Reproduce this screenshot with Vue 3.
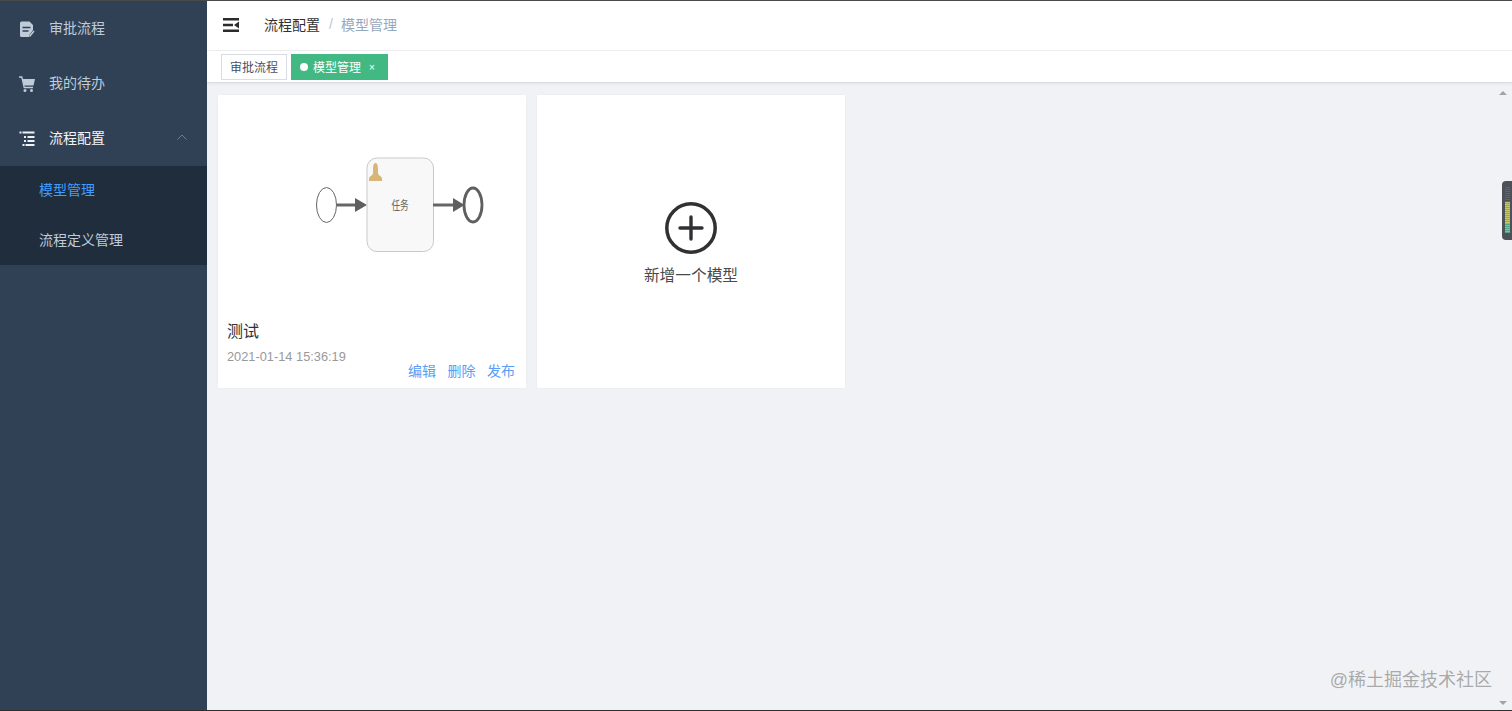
<template>
  <div class="app-wrapper">
    <aside class="sidebar">
      <div v-for="item in menus" :key="item.title" class="menu-item" :class="{ open: item.open }">
        <svg class="menu-icon" viewBox="0 0 16 16" v-html="item.icon"></svg>
        <span class="menu-title">{{ item.title }}</span>
        <svg v-if="item.open" class="arrow" viewBox="0 0 10 6">
          <path d="M0.5 5.500 5 1l4.500 4.500" fill="none" stroke="#6d7c8e" stroke-width="1" />
        </svg>
      </div>
      <div class="submenu">
        <div v-for="sub in subMenus" :key="sub.title" class="sub-item" :class="{ active: sub.active }">
          {{ sub.title }}
        </div>
      </div>
    </aside>

    <main class="main">
      <header class="navbar">
        <svg class="hamburger" viewBox="0 0 16 14">
          <path d="M0 0h16v2.400H0zM0 5.800h10v2.400H0zM0 11.600h16V14H0z" fill="#2b2b2b" />
          <path d="M16 3.500v7l-5-3.500z" fill="#2b2b2b" />
        </svg>
        <span class="crumb">流程配置</span>
        <span class="crumb-sep">/</span>
        <span class="crumb-last">模型管理</span>
      </header>

      <div class="tags">
        <span class="tag"><span class="tag-text">审批流程</span></span>
        <span class="tag current"><i class="dot"></i><span class="tag-text">模型管理</span><b class="close">×</b></span>
      </div>

      <section class="content">
        <div class="card">
          <svg class="diagram" viewBox="0 0 308 222">
            <ellipse cx="108.500" cy="110" rx="10" ry="17.500" fill="#fff" stroke="#666" stroke-width="1" />
            <path d="M119 110h20" stroke="#666" stroke-width="3" />
            <path d="M137 103 149 110l-12 7z" fill="#5f5f5f" />
            <rect x="149" y="63" width="66.500" height="93.500" rx="10" fill="#f8f8f8" stroke="#c9c9c9" stroke-width="1" />
            <path d="M151 86v-2.500c0-2 2.500-2.500 3.500-4 .7-1.200.5-3 .5-5.500 0-3 .6-6 2.500-6s2.500 3 2.500 6c0 2.500-.2 4.300.5 5.500 1 1.500 3.500 2 3.500 4V86z" fill="#d9b678" />
            <text transform="translate(182 115) scale(.72 1)" class="task-label">任务</text>
            <path d="M215 110h22" stroke="#666" stroke-width="3" />
            <path d="M235 103 246.500 110 235 117z" fill="#5f5f5f" />
            <ellipse cx="255" cy="110" rx="9" ry="17" fill="#fff" stroke="#5f5f5f" stroke-width="2.800" />
          </svg>
          <div class="card-info">
            <div class="card-title">测试</div>
            <div class="card-time">2021-01-14 15:36:19</div>
            <div class="card-actions">
              <a>编辑</a>
              <a>删除</a>
              <a>发布</a>
            </div>
          </div>
        </div>

        <div class="card add-card">
          <svg class="add-icon" viewBox="0 0 52 52">
            <circle cx="26" cy="26" r="24.200" fill="none" stroke="#303133" stroke-width="3.500" />
            <path d="M26 15v22M15 26h22" stroke="#303133" stroke-width="3.400" stroke-linecap="round" />
          </svg>
          <div class="add-text">新增一个模型</div>
        </div>

        <div class="scroll-track">
          <i class="scroll-up"></i>
          <i class="scroll-down"></i>
        </div>
      </section>
    </main>

    <div class="meter">
      <i class="meter-off"></i>
      <i class="meter-yellow"></i>
      <i class="meter-green"></i>
    </div>
    <div class="watermark">@稀土掘金技术社区</div>
  </div>
</template>

<script setup>
const menus = [
  {
    title: '审批流程',
    icon: '<path d="M2.500 0.500h8L14 4v5l-4 5.500V16H2.500A1.500 1.500 0 0 1 1 14.500V2A1.500 1.500 0 0 1 2.500 0.500z" fill="#bfcbd9"/><path d="M3.500 6.500h8M3.500 10h6" stroke="#304156" stroke-width="1.600"/><path d="M10.500 15.500l4.500-5.500" stroke="#bfcbd9" stroke-width="1.500"/>'
  },
  {
    title: '我的待办',
    icon: '<path d="M0 1h2.800l2.400 10.500h8.800" fill="none" stroke="#bfcbd9" stroke-width="1.300"/><path d="M3.500 3h12.500l-1.500 6.500H5z" fill="#bfcbd9"/><circle cx="6" cy="14.500" r="1.500" fill="#bfcbd9"/><circle cx="12.500" cy="14.500" r="1.500" fill="#bfcbd9"/>'
  },
  {
    title: '流程配置',
    open: true,
    icon: '<path d="M0.500 0.500h2v2h-2zM3.500 0.500h12v2h-12zM5 5h2v2H5zM8.500 5h7v2h-7zM5 9h2v2H5zM8.500 9h7v2h-7zM3.500 13h2v2h-2zM6.500 13h9v2h-9z" fill="#eef1f4"/>'
  }
]

const subMenus = [
  { title: '模型管理', active: true },
  { title: '流程定义管理' }
]
</script>

<style>
html,
body {
  margin: 0;
  height: 100%;
  overflow: hidden;
}
</style>

<style scoped>
.app-wrapper {
  position: relative;
  display: flex;
  height: 711px;
  box-sizing: border-box;
  border-top: 1px solid #4a4a4a;
  border-bottom: 1px solid #2f2f2f;
  font-family: "Liberation Sans", "Noto Sans CJK SC", sans-serif;
  font-size: 14px;
  background: #f0f2f5;
}

.sidebar {
  width: 207px;
  flex-shrink: 0;
  background: #304156;
}

.menu-item {
  display: flex;
  align-items: center;
  height: 55px;
  padding-left: 19px;
  color: #bfcbd9;
}

.menu-item.open {
  color: #f4f4f5;
}

.menu-icon {
  width: 16px;
  height: 16px;
  margin-right: 14px;
}

.menu-title {
  padding-bottom: 3px;
}

.arrow {
  width: 10px;
  height: 6px;
  margin-left: auto;
  margin-right: 20px;
  margin-bottom: 4px;
}

.submenu {
  background: #1f2d3d;
}

.sub-item {
  height: 49.5px;
  line-height: 48px;
  padding-left: 39px;
  color: #bfcbd9;
}

.sub-item.active {
  color: #409eff;
}

.main {
  flex: 1;
  display: flex;
  flex-direction: column;
  min-width: 0;
}

.navbar {
  display: flex;
  align-items: center;
  height: 50px;
  flex-shrink: 0;
  box-sizing: border-box;
  padding-left: 16px;
  background: #fff;
  border-bottom: 1px solid #eee;
}

.hamburger {
  width: 16px;
  height: 14px;
  margin-right: 25px;
  margin-bottom: 2px;
}

.crumb,
.crumb-sep,
.crumb-last {
  padding-bottom: 3px;
}

.crumb {
  color: #303133;
}

.crumb-sep {
  margin: 0 8px 0 9px;
  color: #c0c4cc;
}

.crumb-last {
  color: #97a8be;
}

.tags {
  display: flex;
  align-items: flex-start;
  gap: 4px;
  height: 32px;
  flex-shrink: 0;
  box-sizing: border-box;
  padding: 3px 0 0 14px;
  background: #fff;
  border-bottom: 1px solid #d8dce5;
  box-shadow: 0 1px 3px rgba(0, 0, 0, 0.06);
}

.tag {
  display: flex;
  align-items: center;
  height: 26px;
  box-sizing: border-box;
  padding: 0 8px;
  border: 1px solid #d8dce5;
  background: #fff;
  color: #495060;
  font-size: 12px;
}

.tag-text {
  padding-bottom: 2px;
}

.tag.current {
  padding: 0 12px 0 8px;
  border-color: #42b983;
  background: #42b983;
  color: #fff;
}

.dot {
  width: 8px;
  height: 8px;
  margin-right: 5px;
  border-radius: 50%;
  background: #fff;
}

.close {
  margin-left: 8px;
  font-size: 10px;
  font-weight: normal;
}

.content {
  position: relative;
  flex: 1;
  display: flex;
  align-items: flex-start;
  gap: 11px;
  padding: 12px 0 0 11px;
  min-height: 0;
}

.card {
  width: 308px;
  height: 293px;
  flex-shrink: 0;
  background: #fff;
  box-shadow: 0 0 2px rgba(0, 0, 0, 0.05);
  display: flex;
  flex-direction: column;
}

.diagram {
  display: block;
  width: 308px;
  height: 222px;
}

.task-label {
  font-size: 12px;
  fill: #666;
  text-anchor: middle;
}

.card-info {
  position: relative;
  padding: 4px 11px 0 9px;
}

.card-title {
  font-size: 16px;
  line-height: 22px;
  color: #303133;
}

.card-time {
  margin-top: 5px;
  font-size: 12.8px;
  line-height: 18px;
  color: #999;
}

.card-actions {
  display: flex;
  justify-content: flex-end;
  gap: 11.5px;
  margin-top: -5px;
  line-height: 20px;
  color: #5a9cf8;
}

.add-card {
  align-items: center;
}

.add-icon {
  width: 52px;
  height: 52px;
  margin-top: 107px;
}

.add-text {
  margin-top: 11px;
  font-size: 15.7px;
  line-height: 22px;
  color: #4a4a4a;
}

.scroll-track {
  position: absolute;
  top: 0;
  right: 0;
  bottom: 0;
  width: 17px;
}

.scroll-up,
.scroll-down {
  position: absolute;
  right: 5px;
  width: 0;
  height: 0;
  border-left: 4px solid transparent;
  border-right: 4px solid transparent;
}

.scroll-up {
  top: 8px;
  border-bottom: 4px solid #a3a3a3;
}

.scroll-down {
  bottom: 5px;
  border-top: 4px solid #a3a3a3;
}

.meter {
  position: absolute;
  top: 180px;
  right: 0;
  width: 10px;
  height: 59px;
  box-sizing: border-box;
  padding: 6px 2px 6px 3px;
  display: flex;
  flex-direction: column;
  border-radius: 4px 0 0 4px;
  background: #4c5159;
}

.meter i {
  display: block;
  min-height: 0;
}

.meter-off {
  height: 15px;
  background: repeating-linear-gradient(#5c6670 0 1px, #4c5159 1px 2px);
}

.meter-yellow {
  height: 21px;
  background: repeating-linear-gradient(#c2c568 0 1px, #a0a35c 1px 2px);
}

.meter-green {
  height: 10px;
  background: repeating-linear-gradient(#66cc9c 0 1px, #4fa682 1px 2px);
}

.watermark {
  position: absolute;
  right: 20px;
  bottom: 18px;
  font-size: 18px;
  line-height: 24px;
  color: rgba(120, 120, 120, 0.6);
}
</style>
